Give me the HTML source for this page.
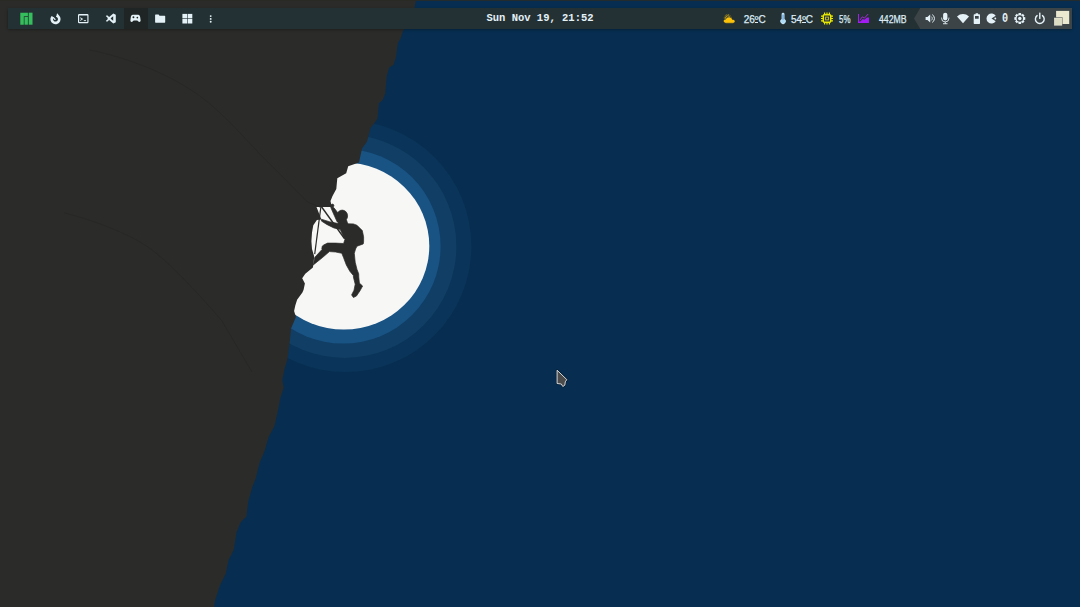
<!DOCTYPE html>
<html><head><meta charset="utf-8"><title>Desktop</title>
<style>
html,body{margin:0;padding:0}
body{width:1080px;height:607px;overflow:hidden;background:#072e50;position:relative;font-family:"Liberation Sans",sans-serif}
#wall{position:absolute;left:0;top:0;width:1080px;height:607px;display:block}
#icons{position:absolute;left:0;top:0;display:block}
#bar{position:absolute;left:8px;top:8px;width:1064px;height:21px;background:#243134;box-shadow:0 0.5px 3px rgba(0,0,0,0.4)}
.ws{position:absolute;left:116px;top:0;width:24px;height:21px;background:#1f2524}
.right{position:absolute;left:906px;top:0;width:158px;height:21px;background:#3c4448;clip-path:polygon(0 50%,6.3px 0,100% 0,100% 100%,6.3px 100%)}
.date{position:absolute;left:0;width:1064px;top:0;height:21px;text-align:center;color:#e4f2f7;font:bold 10.5px/20px "Liberation Mono",monospace;white-space:pre}
.date span{display:inline-block;transform:scaleY(1.1);transform-origin:50% 70%}
.t{position:absolute;top:0.5px;height:21px;line-height:21px;color:#dcebf5;font-size:10px;white-space:pre;transform-origin:0 50%;-webkit-text-stroke:0.25px #dcebf5}
.o{position:relative}
.o::after{content:"";position:absolute;left:0;right:0;bottom:1.5px;height:1px;background:#dcebf5}
.z{position:absolute;top:0;height:21px;color:#e4f2f7;font:bold 13px/21.5px "Liberation Mono",monospace;transform:scaleX(.78);transform-origin:0 50%}
</style></head>
<body>
<svg id="wall" viewBox="0 0 1080 607">
<rect width="1080" height="607" fill="#072e50"/>
<circle cx="345.5" cy="246.2" r="125.9" fill="#0a3459"/>
<circle cx="344.6" cy="246.2" r="111.8" fill="#113e64"/>
<circle cx="343.2" cy="246.2" r="97.4" fill="#185384"/>
<ellipse cx="343.8" cy="246" rx="85.5" ry="83.6" fill="#f7f7f6"/>
<path fill="#2b2b29" d="M0 0L416 0L414.5 8L404.7 29L403.3 30L400.8 37.9L397.9 42.8L395.9 57.7L393.4 65L389.3 67.5L386.8 75.8L385.2 93.9L382.4 100.5L379 103L378.3 110L377.4 119L370.5 128L367 141.6L362 148.5L359 162.4L348.2 166.3L346.2 173.3L337.3 178.2L336.3 189L332.5 195.9L330.5 200.9L331.5 205.8L331.2 207L316.5 207L321.4 219.5L316.9 220L313.3 225.3L312 232.4L311.4 241.3L312 248.9L314.2 256.5L313.3 264.9L312.9 267.6L305.3 273.8L302.2 278.3L304.9 283.6L303.6 289.8L302.4 292.5L297.1 299.7L295.3 305.6L294.1 310.9L295.9 316.9L291.7 327L291.1 328.2L289.6 343L287.4 359.3L284.3 370L282.3 379.9L283.7 387.8L280.4 397.7L277.4 413.5L274.4 426.3L268.5 437.2L264.6 451L259.6 462.8L255.7 478.6L252.3 487L248.4 500.8L246.4 516.6L240.5 522.6L236.5 532.4L233.6 550.2L228.6 560.1L225.7 573.9L219.8 585.8L214.8 601.6L214.2 607L0 607Z"/>
<g fill="none" stroke="#272725" stroke-width="1">
<path d="M89 49.8C130 58 170 75 197.5 94.3S250 145 268.6 162.8L308 202.3L320 207"/>
<path d="M64 212.8C100 222 130 235 148 247S200 295 222 321L252 372"/>
</g>
<g fill="#2b2b29" stroke="#2b2b29" stroke-width="0.7" stroke-linejoin="round">
<ellipse cx="342.2" cy="215.9" rx="5.4" ry="5.8"/>
<circle cx="332.4" cy="205.6" r="1.5"/>
<path d="M338.6 219L346.5 220L348 224.5L338.3 224Z"/>
<path d="M331 206.6L334 207.8L337.6 212.5L339 216L338.8 222.5L337.2 221.9L334.6 216.2L330.8 207.6Z"/>
<path d="M321.4 219.2L329.4 221.7L338.3 223.5L353.4 223.9L357 225.3L362.3 230.6L363.6 236.8L363.6 241.8L363.2 244L357 246.2L355.6 248.9L354.3 253.3L355.2 262.2L357 269.4L358.7 273.8L358.8 277.1L359.4 283.1L362.6 286L360 290.8L356.4 296.1L353.4 297.5L351.6 294.9L354 290.2L355.2 284.2L353.4 277.1L353.4 275.6L349.8 271.2L346.3 264.9L343.6 257.8L341.8 253.3L335.6 252L329.4 251.6L322.2 257.8L313.3 264.9L314.7 257.4L322.2 249.3L321.8 248.9L322.2 246.2L324 244.8L327.6 243.1L335.6 243.1L343.6 243.5L344.9 239.5L342.8 235L340.2 229.4L333.8 227.9L326.7 224.4L321.4 221Z"/>
</g>
<g stroke="#2b2b29" fill="none">
<path d="M321.4 206.6L344.5 238.6" stroke-width="1.6"/>
<path d="M320.9 206.6L314.7 254.2" stroke-width="1.2"/>
</g>
<g transform="translate(557.1,370.2)">
<path d="M0 0V13.3L4.2 13.8L5.7 16.3L7.7 15L8.2 11.6L9.7 9.4Z" fill="none" stroke="#04182c" stroke-opacity="0.55" stroke-width="2.4" stroke-linejoin="round"/>
<path d="M0 0V13.3L4.2 13.8L5.7 16.3L7.7 15L8.2 11.6L9.7 9.4Z" fill="#4b4b4b" stroke="#e6e6e6" stroke-width="0.9" stroke-linejoin="round"/>
</g>
<rect width="1080" height="1" fill="#2a2a24" fill-opacity="0.8"/>
</svg>
<div id="bar">
<div class="ws"></div>
<div class="right"></div>
<div class="date"><span>Sun Nov 19, 21:52</span></div>
<span class="t" style="left:735.7px">26<span class="o">º</span>C</span>
<span class="t" style="left:783px">54<span class="o">º</span>C</span>
<span class="t" style="left:830.7px;transform:scaleX(.79)">5%</span>
<span class="t" style="left:870.7px;transform:scaleX(.87)">442MB</span>
<span class="z" style="left:994px">0</span>
</div>
<svg id="icons" width="1080" height="40" viewBox="0 0 1080 40">
<g fill="#35bf5c">
<path d="M20.3 12.7H27.9V16.2H23.8V24.7H20.3Z"/>
<rect x="24.5" y="17" width="3.4" height="7.7"/>
<rect x="28.7" y="12.7" width="3.8" height="12"/>
</g>
<g fill="#e4f2f7" stroke="none">
<path d="M57.08 14.25A5.1 5.1 0 1 1 51.32 16.17L53.83 17.24A2.5 2.5 0 1 0 55.93 16.64Z"/><path d="M56.73 14.15L57.20 13.20L58.78 15.19L57.25 16.07Z"/><path d="M51.32 16.17L53.83 17.24L56.00 19.40L54.60 20.00Z"/>
<path fill-rule="evenodd" d="M79.2 14H87.3A1.2 1.2 0 0 1 88.5 15.2V22A1.2 1.2 0 0 1 87.3 23.2H79.2A1.2 1.2 0 0 1 78 22V15.2A1.2 1.2 0 0 1 79.2 14ZM79.15 15.4V22.05H87.35V15.4Z"/>
<path d="M80.2 17.2L83.2 19.1L80.2 21V19.9L81.6 19.1L80.2 18.3Z"/>
<rect x="83.8" y="20.2" width="2.2" height="0.9"/>
<path fill-rule="evenodd" d="M113.3 13.5L115.8 14.7V22.3L113.3 23.5L107.4 18.5ZM113.2 16.2L110.3 18.5L113.2 20.8Z"/>
<path d="M105.8 16.1L107.1 15.2L110.9 18.5L107.1 21.8L105.8 20.9L108.4 18.5Z"/>
<path fill-rule="evenodd" d="M132.8 14.7H138.2C139.4 14.7 140 15.9 140.2 17.2L140.6 20.3C140.7 21.5 140 21.9 139.4 21.9C138.5 21.9 138.2 20.9 137.3 20.4H133.7C132.8 20.9 132.5 21.9 131.6 21.9C131 21.9 130.3 21.5 130.4 20.3L130.8 17.2C131 15.9 131.6 14.7 132.8 14.7ZM132.5 17.3A0.95 0.95 0 1 0 134.4 17.3A0.95 0.95 0 1 0 132.5 17.3ZM136.5 17.6A0.85 0.85 0 1 0 138.2 17.6A0.85 0.85 0 1 0 136.5 17.6Z"/>
<path d="M155.7 14.4H158.6L159.5 15.7H164.6A0.6 0.6 0 0 1 165.2 16.2V22.1A0.6 0.6 0 0 1 164.6 22.7H155.7A0.6 0.6 0 0 1 155.1 22.1V15A0.6 0.6 0 0 1 155.7 14.4Z"/>
<rect x="182.4" y="13.9" width="4.6" height="4.4"/><rect x="187.6" y="13.9" width="4.7" height="4.4"/>
<rect x="182.4" y="18.9" width="4.6" height="4.6"/><rect x="187.6" y="18.9" width="4.7" height="4.6"/>
<circle cx="210.7" cy="16.1" r="0.95"/><circle cx="210.7" cy="18.9" r="0.95"/><circle cx="210.7" cy="21.7" r="0.95"/>
</g>
<g>
<circle cx="727.7" cy="17.9" r="2.1" fill="none" stroke="#d9ad12" stroke-width="1"/>
<circle cx="727.7" cy="17.9" r="3.4" fill="none" stroke="#c9a010" stroke-width="0.8" stroke-dasharray="0.9 0.88"/>
<path d="M726.3 23.2C724.7 23.2 723.5 22.3 723.5 21.1C723.5 19.9 724.5 19.1 725.7 19.2C726.1 17.9 727.4 17 728.9 17C730.6 17 732 18 732.3 19.4C733.8 19.3 735 20.1 735 21.3C735 22.4 734 23.2 732.8 23.2Z" fill="#fcc20a" stroke="#243134" stroke-width="0.5"/>
</g>
<g>
<path d="M781.6 14.2A1.45 1.45 0 0 1 784.5 14.2V19A2.7 2.7 0 1 1 781.6 19Z" fill="#bfe2f7"/>
<rect x="782.55" y="14.6" width="1" height="5.4" fill="#4f8fd0"/>
<circle cx="783.05" cy="21.2" r="1.7" fill="#aedcf8"/>
</g>
<g fill="none" stroke="#eaea00">
<rect x="823.3" y="14.8" width="7.4" height="7.4" rx="1" stroke-width="1.5"/>
<path d="M824.6 12.4V14.4M827 12.4V14.4M829.4 12.4V14.4M824.6 22.6V24.6M827 22.6V24.6M829.4 22.6V24.6M821 16.1H823M821 18.5H823M821 20.9H823M831 16.1H833M831 18.5H833M831 20.9H833" stroke-width="1.2"/>
<rect x="825.6" y="17.1" width="2.8" height="2.8" stroke-width="0.9" stroke="#d8c820"/>
</g>
<g>
<path d="M858 13.9H859V21.2L860 21.7L862.7 19L864.3 19.8L867 17.6H869V23H858Z" fill="#a31cf2"/>
<path d="M859.9 20.2L862.3 16.8L864.3 18.2L868.2 14" fill="none" stroke="#aa2ce0" stroke-width="0.9"/>
</g>
<g fill="#e4f2f7">
<path d="M925.6 17H927.4L930.2 14.6V22.4L927.4 20H925.6Z"/>
<path d="M931.3 16.6A2.4 2.4 0 0 1 931.3 20.4" fill="none" stroke="#e4f2f7" stroke-width="0.9"/>
<path d="M932.2 14.6A4.5 4.5 0 0 1 932.2 22.4" fill="none" stroke="#e4f2f7" stroke-width="1"/>
<rect x="943.1" y="12.7" width="4.3" height="7.8" rx="2.15"/>
<path d="M941.6 17.6V18.3A3.65 3.65 0 0 0 948.9 18.3V17.6" fill="none" stroke="#e4f2f7" stroke-width="0.9"/>
<rect x="944.8" y="21.8" width="0.9" height="1.8"/>
<rect x="943" y="23.3" width="4.5" height="0.9"/>
<path d="M957 16.4C960.6 13.1 965.4 13.1 969 16.4L963 23.3Z"/>
<path fill-rule="evenodd" d="M975.6 13.3H978.1V14.3H979.4A0.6 0.6 0 0 1 980 14.9V23.3A0.6 0.6 0 0 1 979.4 23.9H974.3A0.6 0.6 0 0 1 973.7 23.3V14.9A0.6 0.6 0 0 1 974.3 14.3H975.6ZM975 15.9V18.7H978.7V15.9Z"/>
<path d="M991.5 18.5L995.7 15.8A5 5 0 1 0 995.7 21.2Z"/>
<circle cx="995.3" cy="18.5" r="0.95"/>
<path fill-rule="evenodd" d="M1018.58 13.03L1021.02 13.03L1021.19 14.43L1021.69 14.64L1022.80 13.77L1024.53 15.50L1023.66 16.61L1023.87 17.11L1025.27 17.28L1025.27 19.72L1023.87 19.89L1023.66 20.39L1024.53 21.50L1022.80 23.23L1021.69 22.36L1021.19 22.57L1021.02 23.97L1018.58 23.97L1018.41 22.57L1017.91 22.36L1016.80 23.23L1015.07 21.50L1015.94 20.39L1015.73 19.89L1014.33 19.72L1014.33 17.28L1015.73 17.11L1015.94 16.61L1015.07 15.50L1016.80 13.77L1017.91 14.64L1018.41 14.43ZM1016.6 18.5A3.2 3.2 0 1 0 1023 18.5A3.2 3.2 0 1 0 1016.6 18.5Z"/>
<circle cx="1019.8" cy="18.5" r="1.7"/>
<path d="M1037.1 15.6A4.4 4.4 0 1 0 1042.5 15.6" fill="none" stroke="#e4f2f7" stroke-width="1.4" stroke-linecap="round"/>
<rect x="1039.1" y="12.5" width="1.4" height="6.6" rx="0.5"/>
</g>
<rect x="1056.1" y="10.9" width="13.1" height="13.1" fill="#ebe8d0"/>
<rect x="1053.6" y="17.3" width="8.9" height="8.5" fill="#3c4448"/>
<rect x="1054.3" y="18" width="7.6" height="7.2" fill="#dcdcc2" stroke="#efefe0" stroke-width="0.5"/>
</svg>

</body></html>
